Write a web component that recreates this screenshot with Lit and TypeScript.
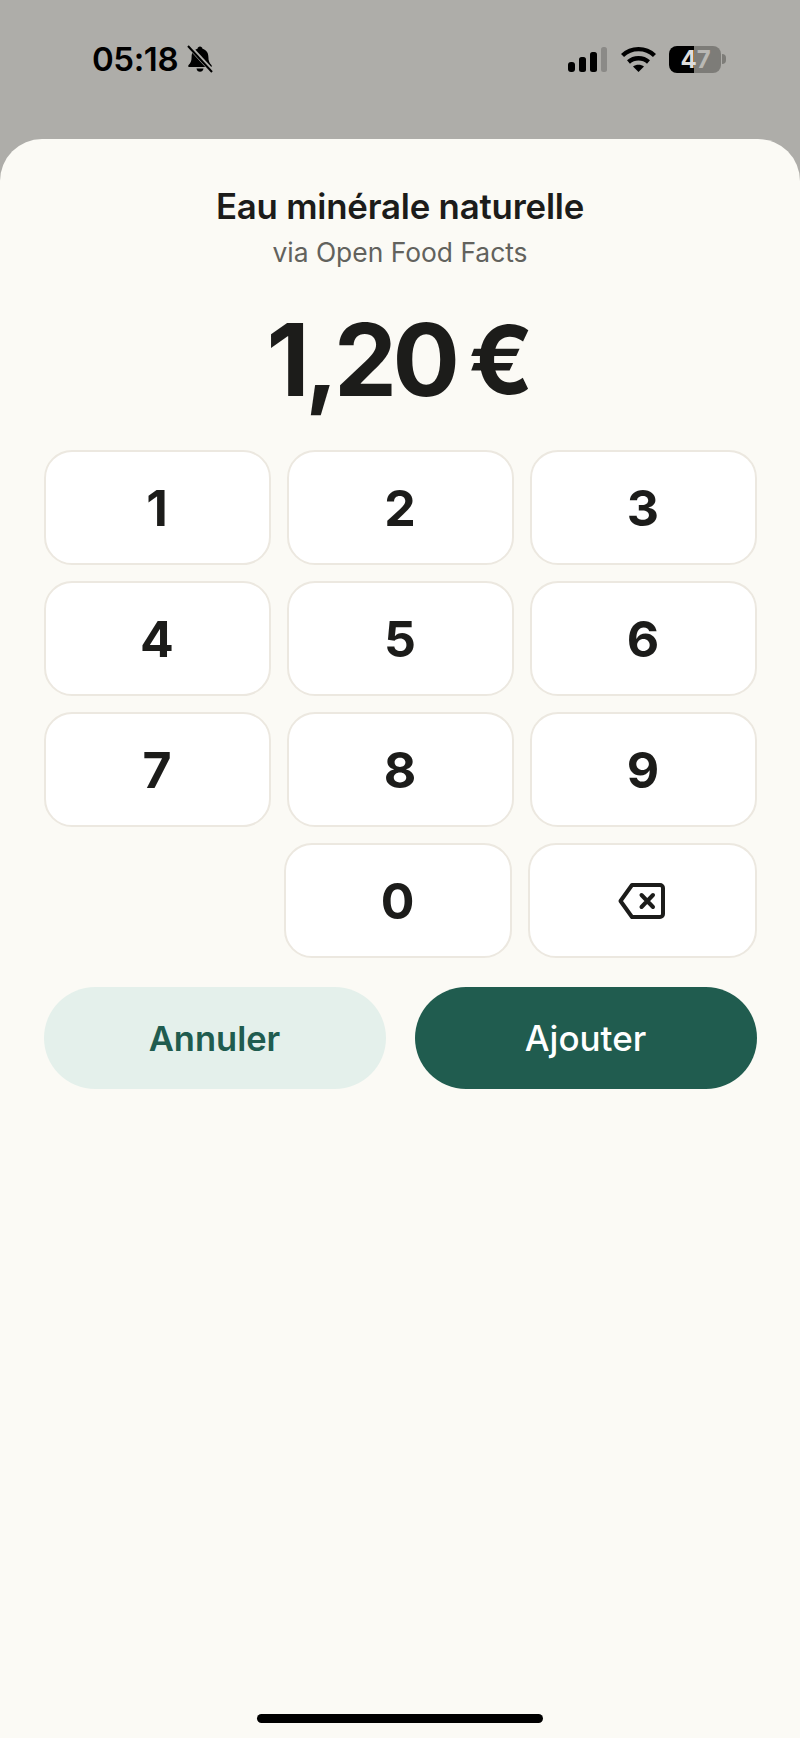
import { LitElement, html, css } from "lit";
import { customElement } from "lit/decorators.js";

@customElement("app-root")
export class AppRoot extends LitElement {
  static styles = css`
    :host {
      display: block;
      width: 800px;
      height: 1738px;
      background: #aeada9;
      font-family: Inter, "Liberation Sans", sans-serif;
      color: #1c1c1a;
      overflow: hidden;
    }
    .status {
      height: 139px;
      box-sizing: border-box;
      padding: 41px 74px 0 92px;
      display: flex;
      align-items: flex-start;
      justify-content: space-between;
      color: #000;
    }
    .left { display: flex; align-items: center; gap: 9px; height: 36px; }
    .time { font-size: 33px; font-weight: 600; line-height: 36px; letter-spacing: -0.4px; }
    .right { display: flex; align-items: center; height: 36px; }
    .sig { margin-right: 14px; display: block; }
    .wifi { margin-right: 13px; display: block; }
    .battery {
      width: 52px;
      height: 27px;
      box-sizing: border-box;
      padding-left: 1px;
      border-radius: 8px;
      background: linear-gradient(90deg, #000 0 25px, #7d7c78 25px 100%);
      font-size: 24px;
      font-weight: 700;
      line-height: 27px;
      display: flex;
      justify-content: center;
    }
    .battery .a { color: #dedddb; }
    .battery .b { color: #b9b8b4; }
    .tip {
      width: 4px;
      height: 10px;
      background: #7d7c78;
      border-radius: 0 5px 5px 0;
      margin-left: 1px;
    }
    .sheet {
      height: 1599px;
      box-sizing: border-box;
      background: #fbfaf5;
      border-radius: 42px 42px 0 0;
      padding: 45px 44px 0;
      display: flex;
      flex-direction: column;
      align-items: center;
      position: relative;
    }
    .title { font-size: 34.800px; font-weight: 600; line-height: 44px; letter-spacing: -0.2px; }
    .sub { font-size: 26.400px; font-weight: 400; line-height: 36px; color: #62625d; margin-top: 6px; }
    .price {
      font-weight: 750;
      height: 120px;
      line-height: 120px;
      margin-top: 30px;
      display: flex;
      align-items: center;
      gap: 13px;
    }
    .num { font-size: 100px; letter-spacing: -4.500px; }
    .cur { font-size: 95px; }
    .pad {
      margin-top: 30px;
      display: grid;
      grid-template-columns: repeat(3, 1fr);
      gap: 16px;
      width: 713px;
    }
    .last {
      width: 713px;
      margin-top: 16px;
      display: flex;
      justify-content: flex-end;
      gap: 16px;
    }
    .last .key { width: 228px; }
    .last .key.back { width: 229px; }
    .key {
      height: 115px;
      box-sizing: border-box;
      background: #fff;
      border: 2px solid #ece8e0;
      border-radius: 28px;
      display: flex;
      align-items: center;
      justify-content: center;
      font-size: 50px;
      font-weight: 700;
    }
    .actions {
      width: 713px;
      margin-top: 29px;
      display: flex;
      justify-content: space-between;
    }
    .btn {
      width: 342px;
      height: 102px;
      border-radius: 51px;
      display: flex;
      align-items: center;
      justify-content: center;
      font-weight: 600;
    }
    .cancel { background: #e4f0eb; color: #205c4f; font-size: 34.500px; }
    .add { background: #205c4f; color: #fff; font-size: 35px; font-weight: 500; }
    .home {
      position: absolute;
      left: 257px;
      top: 1575px;
      width: 286px;
      height: 9px;
      border-radius: 5px;
      background: #000;
    }
  `;

  render() {
    const keys = ["1", "2", "3", "4", "5", "6", "7", "8", "9"];
    return html`
      <div class="status">
        <div class="left">
          <span class="time">05:18</span>
          <svg width="26" height="28" viewBox="0 0 26 28">
            <path fill="#000" d="M13 1.500c1.400 0 2.300 1 2.500 2.200 3.800 1 5.900 4.200 5.900 8.200 0 4.300 1 6 3 8 .8.900.3 2.100-.9 2.100H2.500c-1.200 0-1.700-1.200-.9-2.100 2-2 3-3.700 3-8 0-4 2.100-7.200 5.900-8.200.2-1.200 1.100-2.200 2.500-2.200z"/>
            <path fill="#000" d="M9.500 23.500h7c-.2 2-1.700 3.300-3.500 3.300s-3.300-1.300-3.500-3.300z"/>
            <path stroke="#aeada9" stroke-width="4.500" d="M1 0 25 26"/>
            <path stroke="#000" stroke-width="2" d="M1 1 25 27"/>
          </svg>
        </div>
        <div class="right">
          <svg class="sig" width="39" height="25" viewBox="0 0 39 25">
            <rect x="0" y="15" width="7" height="10" rx="3" fill="#000"/>
            <rect x="11" y="10" width="7" height="15" rx="2.500" fill="#000"/>
            <rect x="22" y="5" width="7" height="20" rx="2.500" fill="#000"/>
            <rect x="33" y="0" width="6" height="25" rx="2.500" fill="#8b8a87"/>
          </svg>
          <svg class="wifi" width="35" height="26" viewBox="0 0 35 26">
            <path fill="none" stroke="#000" stroke-width="4.400" d="M1.500 9.500C10.300 1 24.700 1 33.500 9.500"/>
            <path fill="none" stroke="#000" stroke-width="4.400" d="M7.500 16c5.500-5 14.500-5 20 0"/>
            <path fill="#000" d="M12 20.500c3-2.400 8-2.400 11 0L17.500 26z"/>
          </svg>
          <div class="battery"><span class="a">4</span><span class="b">7</span></div>
          <div class="tip"></div>
        </div>
      </div>
      <div class="sheet">
        <div class="title">Eau minérale naturelle</div>
        <div class="sub">via Open Food Facts</div>
        <div class="price"><span class="num">1,20</span><span class="cur">€</span></div>
        <div class="pad">
          ${keys.map((k) => html`<div class="key">${k}</div>`)}
        </div>
        <div class="last">
          <div class="key">0</div>
          <div class="key back">
            <svg width="48" height="38" viewBox="0 0 48 38">
              <path fill="none" stroke="#1c1c1a" stroke-width="4" stroke-linejoin="round" d="M14 3H42a3 3 0 0 1 3 3V32a3 3 0 0 1-3 3H14L2.500 19Z"/>
              <path fill="none" stroke="#1c1c1a" stroke-width="4" stroke-linecap="round" d="M23.500 13 35 25M35 13 23.500 25"/>
            </svg>
          </div>
        </div>
        <div class="actions">
          <div class="btn cancel">Annuler</div>
          <div class="btn add">Ajouter</div>
        </div>
        <div class="home"></div>
      </div>
    `;
  }
}
